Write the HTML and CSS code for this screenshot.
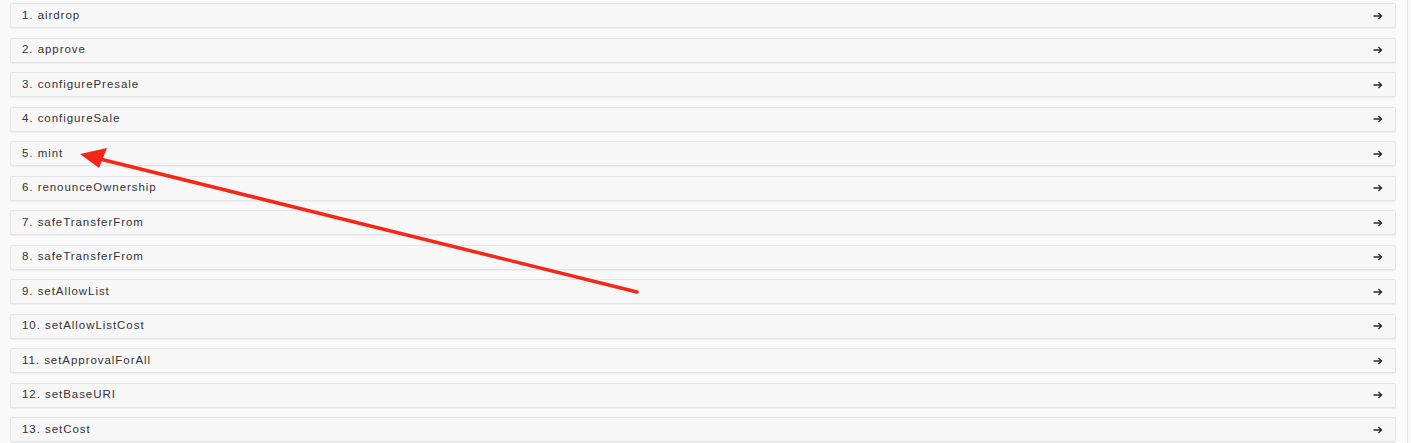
FILE: index.html
```html
<!DOCTYPE html>
<html>
<head>
<meta charset="utf-8">
<link rel="stylesheet" href="styles.css">
</head>
<body>
<div class="page">
  <div class="list">
    <div class="item"><span>1. airdrop</span><svg class="go" width="10" height="8" viewBox="0 0 10 8"><path d="M0.5 4H8.6M5.4 1L8.6 4L5.4 7"/></svg></div>
    <div class="item"><span>2. approve</span><svg class="go" width="10" height="8" viewBox="0 0 10 8"><path d="M0.5 4H8.6M5.4 1L8.6 4L5.4 7"/></svg></div>
    <div class="item"><span>3. configurePresale</span><svg class="go" width="10" height="8" viewBox="0 0 10 8"><path d="M0.5 4H8.6M5.4 1L8.6 4L5.4 7"/></svg></div>
    <div class="item"><span>4. configureSale</span><svg class="go" width="10" height="8" viewBox="0 0 10 8"><path d="M0.5 4H8.6M5.4 1L8.6 4L5.4 7"/></svg></div>
    <div class="item"><span>5. mint</span><svg class="go" width="10" height="8" viewBox="0 0 10 8"><path d="M0.5 4H8.6M5.4 1L8.6 4L5.4 7"/></svg></div>
    <div class="item"><span>6. renounceOwnership</span><svg class="go" width="10" height="8" viewBox="0 0 10 8"><path d="M0.5 4H8.6M5.4 1L8.6 4L5.4 7"/></svg></div>
    <div class="item"><span>7. safeTransferFrom</span><svg class="go" width="10" height="8" viewBox="0 0 10 8"><path d="M0.5 4H8.6M5.4 1L8.6 4L5.4 7"/></svg></div>
    <div class="item"><span>8. safeTransferFrom</span><svg class="go" width="10" height="8" viewBox="0 0 10 8"><path d="M0.5 4H8.6M5.4 1L8.6 4L5.4 7"/></svg></div>
    <div class="item"><span>9. setAllowList</span><svg class="go" width="10" height="8" viewBox="0 0 10 8"><path d="M0.5 4H8.6M5.4 1L8.6 4L5.4 7"/></svg></div>
    <div class="item"><span>10. setAllowListCost</span><svg class="go" width="10" height="8" viewBox="0 0 10 8"><path d="M0.5 4H8.6M5.4 1L8.6 4L5.4 7"/></svg></div>
    <div class="item"><span>11. setApprovalForAll</span><svg class="go" width="10" height="8" viewBox="0 0 10 8"><path d="M0.5 4H8.6M5.4 1L8.6 4L5.4 7"/></svg></div>
    <div class="item"><span>12. setBaseURI</span><svg class="go" width="10" height="8" viewBox="0 0 10 8"><path d="M0.5 4H8.6M5.4 1L8.6 4L5.4 7"/></svg></div>
    <div class="item"><span>13. setCost</span><svg class="go" width="10" height="8" viewBox="0 0 10 8"><path d="M0.5 4H8.6M5.4 1L8.6 4L5.4 7"/></svg></div>
  </div>
  <div class="side"></div>
</div>
<svg class="annot" width="1411" height="443" viewBox="0 0 1411 443">
  <line x1="637" y1="292" x2="100" y2="159" stroke="#f7261b" stroke-width="3.5" stroke-linecap="round"/>
  <polygon points="80,154 107,148 99,168" fill="#f7261b"/>
</svg>
</body>
</html>
```

FILE: styles.css
```css
html, body {
  margin: 0;
  padding: 0;
  background: #ffffff;
  overflow: hidden;
}
.page {
  display: flex;
  width: 1411px;
  height: 443px;
  background: #f9f9f9;
  font-family: "Liberation Sans", Arial, sans-serif;
}
.list {
  width: 1386px;
  padding: 3px 0 0 10px;
}
.side {
  width: 11px;
  border-right: 1px solid #e6e6e6;
  background: #fbfbfb;
}
.item {
  box-sizing: border-box;
  height: 25px;
  margin-bottom: 9.5px;
  display: flex;
  align-items: center;
  justify-content: space-between;
  padding: 0 11px 0 11px;
  background: #f7f7f8;
  border: 1px solid #e4e4e6;
  border-radius: 2px;
  box-shadow: 0 1px 1px rgba(0,0,0,0.05);
  font-size: 11.5px;
  color: #333;
  letter-spacing: 0.95px;
  line-height: 1;
}
.go {
  fill: none;
  stroke: #2a2a2a;
  stroke-width: 1.3;
  margin-right: 1px;
}
.annot {
  position: absolute;
  left: 0;
  top: 0;
  pointer-events: none;
}
```
